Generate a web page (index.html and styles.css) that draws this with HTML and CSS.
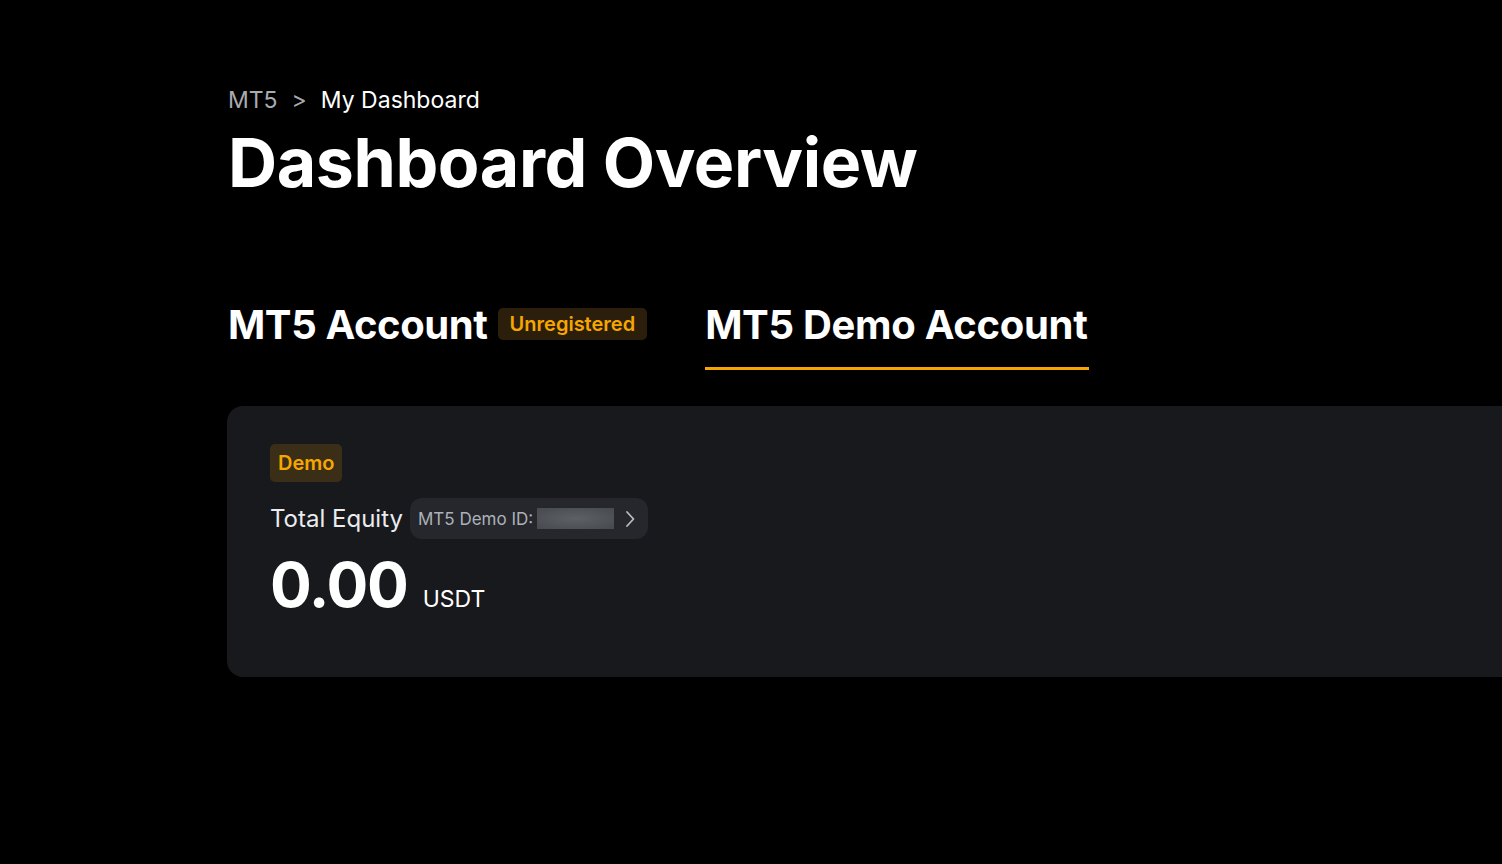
FILE: index.html
```html
<!DOCTYPE html>
<html lang="en">
<head>
  <meta charset="UTF-8">
  <title>MT5 - My Dashboard</title>
  <link rel="stylesheet" href="styles.css">
</head>
<body>
  <div class="page">
    <div class="breadcrumb">
      <span class="crumb-muted">MT5</span>
      <span class="crumb-sep">&gt;</span>
      <span class="crumb-current">My Dashboard</span>
    </div>
    <h1 class="title">Dashboard Overview</h1>

    <div class="tabs">
      <div class="tab">
        <span class="tab-label">MT5 Account</span>
        <span class="tag-unregistered">Unregistered</span>
      </div>
      <div class="tab tab-active">
        <span class="tab-label">MT5 Demo Account</span>
      </div>
    </div>

    <div class="card">
      <span class="tag-demo">Demo</span>
      <div class="equity-row">
        <span class="equity-label">Total Equity</span>
        <span class="id-pill">
          MT5 Demo ID:
          <span class="id-mask"></span>
          <svg class="chevron" width="12" height="18" viewBox="0 0 12 18" fill="none">
            <path d="M3 2L9.5 9L3 16" stroke="#b7bdc6" stroke-width="1.8" stroke-linecap="round" stroke-linejoin="round"/>
          </svg>
        </span>
      </div>
      <div class="amount-row">
        <span class="amount">0.00</span>
        <span class="currency">USDT</span>
      </div>
    </div>
  </div>
</body>
</html>
```

FILE: styles.css
```css
body {
  margin: 0;
  padding: 0;
  background-color: #000;
  color: #fff;
  font-family: Inter, "Noto Sans", sans-serif;
}
.page {
  padding: 84px 0 0 228px;
  overflow: hidden;
  min-height: 780px;
}
.breadcrumb {
  display: flex;
  align-items: center;
  gap: 14px;
  font-size: 23px;
  line-height: 32px;
}
.crumb-muted,
.crumb-sep {
  color: #a8abb0;
}
.crumb-current {
  color: #fff;
}
.title {
  margin: 6px 0 0;
  font-size: 68px;
  line-height: 80px;
  font-weight: 700;
  letter-spacing: -0.4px;
}
.tabs {
  display: flex;
  gap: 58px;
  margin-top: 98px;
}
.tab {
  display: flex;
  align-items: center;
  gap: 10px;
  height: 48px;
  padding-bottom: 19px;
  border-bottom: 3px solid transparent;
}
.tab-active {
  border-bottom-color: #f7a600;
}
.tab-label {
  font-size: 40px;
  font-weight: 700;
  letter-spacing: -0.4px;
}
.tab-active .tab-label {
  letter-spacing: -0.3px;
  padding-right: 1px;
}
.tag-unregistered {
  background-color: #2b1f0b;
  color: #f7a600;
  font-size: 20px;
  font-weight: 600;
  line-height: 32px;
  padding: 0 12px;
  border-radius: 5px;
}
.card {
  margin: 36px -30px 0 -1px;
  background-color: #18191d;
  border-radius: 16px;
  padding: 38px 43px 52px;
}
.tag-demo {
  display: inline-block;
  background-color: #3b2e17;
  color: #f7a600;
  font-size: 20px;
  font-weight: 600;
  line-height: 38px;
  padding: 0 8px;
  border-radius: 5px;
}
.equity-row {
  display: flex;
  align-items: center;
  gap: 7px;
  margin-top: 16px;
}
.equity-label {
  font-size: 24px;
  color: #eaecef;
}
.id-pill {
  display: flex;
  align-items: center;
  height: 41px;
  padding: 0 12px 0 8px;
  background-color: #25272c;
  border-radius: 12px;
  color: #adb1b8;
  font-size: 17px;
}
.id-mask {
  width: 77px;
  height: 21px;
  margin: 0 10px 0 4px;
  background: radial-gradient(ellipse at center, #5d6065, #46494e);
}
.amount-row {
  display: flex;
  align-items: baseline;
  gap: 15px;
  margin-top: 6px;
}
.amount {
  font-size: 62px;
  line-height: 80px;
  font-weight: 700;
  letter-spacing: -1.2px;
}
.currency {
  font-size: 23px;
  color: #fff;
}
```
